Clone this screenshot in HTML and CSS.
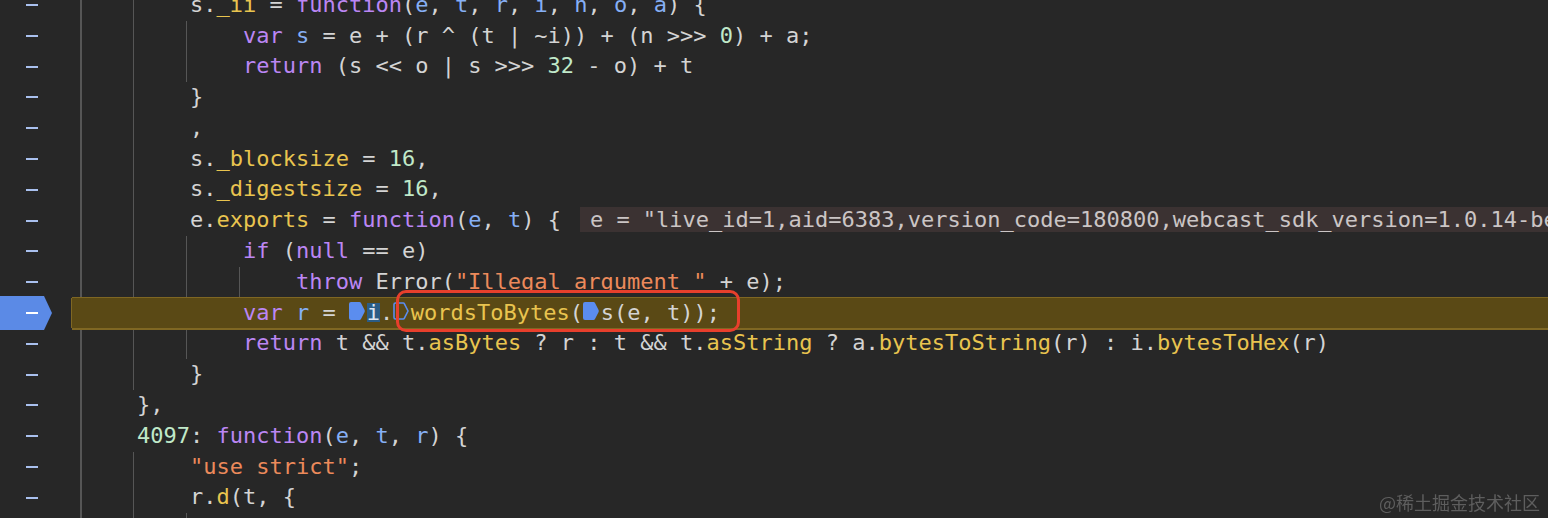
FILE: index.html
```html
<!DOCTYPE html>
<html>
<head lang="en">
    <meta charset="UTF-8">
    <title>Sources</title>
    <link rel="stylesheet" href="styles.css">
</head>
<body>
<div class="editor">
    <div class="row"><div class="gut"><i class="dash"></i></div><div class="ln g2">        s.<span class="p">_ii</span> = <span class="k">function</span>(<span class="d">e</span>, <span class="d">t</span>, <span class="d">r</span>, <span class="d">i</span>, <span class="d">n</span>, <span class="d">o</span>, <span class="d">a</span>) {</div></div>
    <div class="row"><div class="gut"><i class="dash"></i></div><div class="ln g3">            <span class="k">var</span> <span class="d">s</span> = e + (r ^ (t | ~i)) + (n &gt;&gt;&gt; <span class="n">0</span>) + a;</div></div>
    <div class="row"><div class="gut"><i class="dash"></i></div><div class="ln g3">            <span class="k">return</span> (s &lt;&lt; o | s &gt;&gt;&gt; <span class="n">32</span> - o) + t</div></div>
    <div class="row"><div class="gut"><i class="dash"></i></div><div class="ln g2">        }</div></div>
    <div class="row"><div class="gut"><i class="dash"></i></div><div class="ln g2">        ,</div></div>
    <div class="row"><div class="gut"><i class="dash"></i></div><div class="ln g2">        s.<span class="p">_blocksize</span> = <span class="n">16</span>,</div></div>
    <div class="row"><div class="gut"><i class="dash"></i></div><div class="ln g2">        s.<span class="p">_digestsize</span> = <span class="n">16</span>,</div></div>
    <div class="row"><div class="gut"><i class="dash"></i></div><div class="ln g2">        e.<span class="p">exports</span> = <span class="k">function</span>(<span class="d">e</span>, <span class="d">t</span>) {<span class="val">e = "live_id=1,aid=6383,version_code=180800,webcast_sdk_version=1.0.14-beta.0,update_version_code=1.0.14-beta.0"</span></div></div>
    <div class="row"><div class="gut"><i class="dash"></i></div><div class="ln g3">            <span class="k">if</span> (<span class="k">null</span> == e)</div></div>
    <div class="row"><div class="gut"><i class="dash"></i></div><div class="ln g4">                <span class="k">throw</span> Error(<span class="s">"Illegal argument "</span> + e);</div></div>
    <div class="row"><div class="gut"><div class="bp"><i class="dash"></i></div></div><div class="ln hl">            <span class="k">var</span> <span class="d">r</span> = <svg class="mk" width="16" height="18" viewBox="0 0 16 18"><path d="M2 0H10.5Q11.5 0 12 1L15.6 8Q16 9 15.6 10L12 17Q11.5 18 10.5 18H2Q0 18 0 16V2Q0 0 2 0Z" fill="#5b8def"/></svg><span class="sel">i</span>.<span class="box"><svg class="mk" width="16" height="18" viewBox="0 0 16 18"><path d="M2.5 1H10.3Q11 1 11.4 1.8L15 9L11.4 16.2Q11 17 10.3 17H2.5Q1 17 1 15.5V2.5Q1 1 2.5 1Z" fill="none" stroke="#5b8def" stroke-width="1.6"/></svg><span class="p">wordsToBytes</span>(<svg class="mk" width="16" height="18" viewBox="0 0 16 18"><path d="M2 0H10.5Q11.5 0 12 1L15.6 8Q16 9 15.6 10L12 17Q11.5 18 10.5 18H2Q0 18 0 16V2Q0 0 2 0Z" fill="#5b8def"/></svg>s(e, t));</span></div></div>
    <div class="row"><div class="gut"><i class="dash"></i></div><div class="ln g3">            <span class="k">return</span> t &amp;&amp; t.<span class="p">asBytes</span> ? r : t &amp;&amp; t.<span class="p">asString</span> ? a.<span class="p">bytesToString</span>(r) : i.<span class="p">bytesToHex</span>(r)</div></div>
    <div class="row"><div class="gut"><i class="dash"></i></div><div class="ln g2">        }</div></div>
    <div class="row"><div class="gut"><i class="dash"></i></div><div class="ln g1">    },</div></div>
    <div class="row"><div class="gut"><i class="dash"></i></div><div class="ln g1">    <span class="n">4097</span>: <span class="k">function</span>(<span class="d">e</span>, <span class="d">t</span>, <span class="d">r</span>) {</div></div>
    <div class="row"><div class="gut"><i class="dash"></i></div><div class="ln g2">        <span class="s">"use strict"</span>;</div></div>
    <div class="row"><div class="gut"><i class="dash"></i></div><div class="ln g2">        r.<span class="p">d</span>(t, {</div></div>
    <div class="row"><div class="gut"><i class="dash"></i></div><div class="ln g3">            <span class="p">default</span>: <span class="k">function</span>() {</div></div>
</div>
<div class="watermark">@稀土掘金技术社区</div>
</body>
</html>
```

FILE: styles.css
```css
html, body {
    margin: 0;
    padding: 0;
    background: #272727;
    overflow: hidden;
}
.editor {
    margin-top: -10.3px;
    font-family: "DejaVu Sans Mono", "Liberation Mono", monospace;
    font-size: 22px;
    color: #d4d4d4;
}
.row {
    display: flex;
    height: 30.8px;
}
.gut {
    width: 72px;
    flex: none;
    display: flex;
    align-items: center;
}
.dash {
    display: block;
    width: 12px;
    height: 2px;
    margin-left: 26px;
    background: #a9c0ee;
}
.bp {
    width: 52px;
    height: 34px;
    flex: none;
    display: flex;
    align-items: center;
    background: #5b8ae6;
    clip-path: polygon(0 0, 44px 0, 52px 50%, 44px 100%, 0 100%);
}
.bp .dash {
    background: #ffffff;
}
.ln {
    flex: 1;
    min-width: 0;
    padding-left: 12px;
    line-height: 30.8px;
    white-space: pre;
    overflow: hidden;
    background-image: repeating-linear-gradient(to right, #565656 0 1.5px, transparent 1.5px 4ch);
    background-position: 7.5px 0;
    background-repeat: no-repeat;
    background-size: 0 100%;
}
.g1 { background-size: 4ch 100%; }
.g2 { background-size: 8ch 100%; }
.g3 { background-size: 12ch 100%; }
.g4 { background-size: 16ch 100%; }
.ln.hl {
    overflow: visible;
    position: relative;
    background: #5a4915;
    box-shadow: 0 -1px 0 #7f6723, 0 2px 0 #7f6723, -1px 0 0 #7f6723;
}
.k { color: #bb86f4; }
.d { color: #86aff5; }
.p { color: #e9c44f; }
.n { color: #c0e9c9; }
.s { color: #ec8a5b; }
.val {
    margin-left: 19px;
    padding: 0 10px;
    background: #3b3232;
    color: #cbc5c5;
}
.mk {
    display: inline-block;
    margin-right: 1.7px;
    vertical-align: baseline;
}
.sel {
    display: inline-block;
    height: 19px;
    line-height: 19px;
    background: #2b5c86;
    color: #dbe6f2;
}
.box {
    position: relative;
}
.box::after {
    content: "";
    position: absolute;
    left: 3px;
    right: -20px;
    top: -10px;
    bottom: -7px;
    border: 3.5px solid #e83f2c;
    border-radius: 10px;
}
.watermark {
    position: fixed;
    right: 8px;
    bottom: 7px;
    font-family: "Noto Sans CJK SC", "Noto Sans", sans-serif;
    font-size: 18px;
    line-height: 1;
    color: #5e5e5e;
}
```
